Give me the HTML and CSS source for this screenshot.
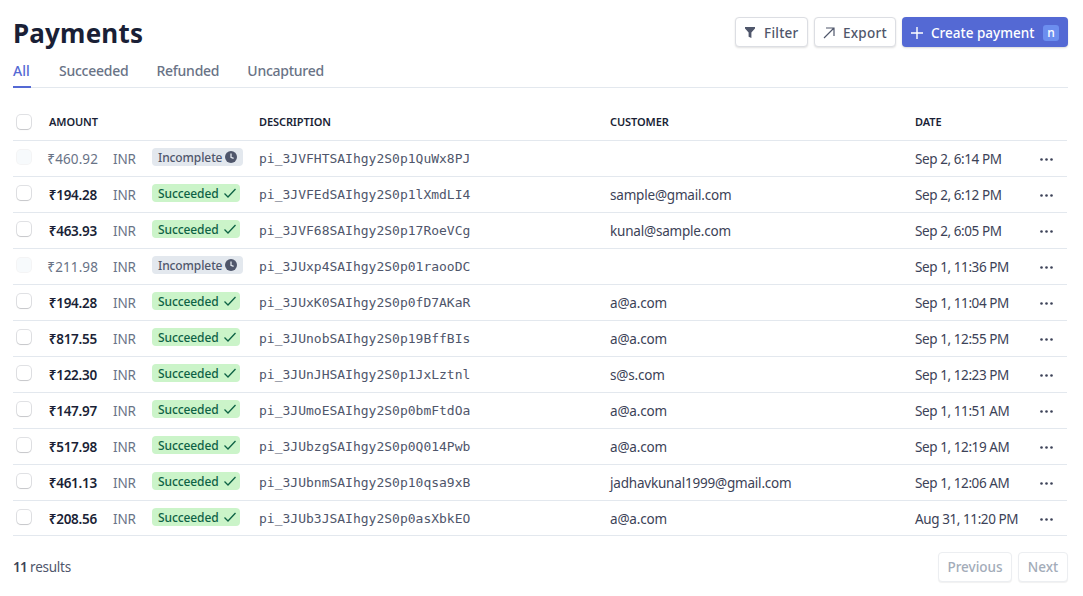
FILE: index.html
```html
<!DOCTYPE html>
<html lang="en">
<head>
<meta charset="utf-8">
<title>Payments</title>
<link rel="stylesheet" href="styles.css">
</head>
<body>
<svg class="defs" width="0" height="0" aria-hidden="true">
  <symbol id="check" viewBox="0 0 14 12"><path d="M1.5 6.5 5 10 12.5 2" fill="none" stroke="currentColor" stroke-width="1.3"/></symbol>
  <symbol id="clock" viewBox="0 0 12 12"><circle cx="6" cy="6" r="6" fill="currentColor"/><path d="M6 2.6V6.3L8.6 7.4" fill="none" stroke="#e3e8ef" stroke-width="1.3"/></symbol>
  <symbol id="dots" viewBox="0 0 13 3"><circle cx="1.5" cy="1.5" r="1.3"/><circle cx="6.5" cy="1.5" r="1.3"/><circle cx="11.5" cy="1.5" r="1.3"/></symbol>
</svg>
<main class="page">
  <header class="top">
    <h1>Payments</h1>
    <div class="actions">
      <button class="btn filter"><svg width="10" height="11" viewBox="0 0 10 11"><path d="M0 0H10V1.6L6.4 5.4V11L3.6 9.8V5.4L0 1.6Z" fill="currentColor"/></svg>Filter</button>
      <button class="btn export"><svg width="12" height="12" viewBox="0 0 12 12"><path d="M1 11 11 1M3 1H11V9" fill="none" stroke="currentColor" stroke-width="1.2"/></svg>Export</button>
      <button class="btn primary"><svg width="12" height="12" viewBox="0 0 12 12"><path d="M6 0V12M0 6H12" stroke="currentColor" stroke-width="1.4"/></svg>Create payment<span class="kbd">n</span></button>
    </div>
  </header>
  <nav class="tabs">
    <a class="tab active">All</a><a class="tab">Succeeded</a><a class="tab">Refunded</a><a class="tab">Uncaptured</a>
  </nav>
  <table>
    <colgroup><col class="c-check"><col class="c-amt"><col class="c-cur"><col class="c-badge"><col class="c-desc"><col class="c-cust"><col class="c-date"><col class="c-more"></colgroup>
    <thead>
      <tr><th><span class="box"></span></th><th class="h-amt" colspan="3">AMOUNT</th><th>DESCRIPTION</th><th>CUSTOMER</th><th>DATE</th><th></th></tr>
    </thead>
    <tbody>
      <tr class="muted"><td><span class="box"></span></td><td class="amount">₹460.92</td><td class="cur">INR</td><td><span class="badge grey">Incomplete<svg width="12" height="12"><use href="#clock"/></svg></span></td><td class="mono">pi_3JVFHTSAIhgy2S0p1QuWx8PJ</td><td class="cust"></td><td class="date">Sep 2, 6:14 PM</td><td class="more"><svg width="13" height="3"><use href="#dots"/></svg></td></tr>
      <tr><td><span class="box"></span></td><td class="amount">₹194.28</td><td class="cur">INR</td><td><span class="badge green">Succeeded<svg width="14" height="12"><use href="#check"/></svg></span></td><td class="mono">pi_3JVFEdSAIhgy2S0p1lXmdLI4</td><td class="cust">sample@gmail.com</td><td class="date">Sep 2, 6:12 PM</td><td class="more"><svg width="13" height="3"><use href="#dots"/></svg></td></tr>
      <tr><td><span class="box"></span></td><td class="amount">₹463.93</td><td class="cur">INR</td><td><span class="badge green">Succeeded<svg width="14" height="12"><use href="#check"/></svg></span></td><td class="mono">pi_3JVF68SAIhgy2S0p17RoeVCg</td><td class="cust">kunal@sample.com</td><td class="date">Sep 2, 6:05 PM</td><td class="more"><svg width="13" height="3"><use href="#dots"/></svg></td></tr>
      <tr class="muted"><td><span class="box"></span></td><td class="amount">₹211.98</td><td class="cur">INR</td><td><span class="badge grey">Incomplete<svg width="12" height="12"><use href="#clock"/></svg></span></td><td class="mono">pi_3JUxp4SAIhgy2S0p01raooDC</td><td class="cust"></td><td class="date">Sep 1, 11:36 PM</td><td class="more"><svg width="13" height="3"><use href="#dots"/></svg></td></tr>
      <tr><td><span class="box"></span></td><td class="amount">₹194.28</td><td class="cur">INR</td><td><span class="badge green">Succeeded<svg width="14" height="12"><use href="#check"/></svg></span></td><td class="mono">pi_3JUxK0SAIhgy2S0p0fD7AKaR</td><td class="cust">a@a.com</td><td class="date">Sep 1, 11:04 PM</td><td class="more"><svg width="13" height="3"><use href="#dots"/></svg></td></tr>
      <tr><td><span class="box"></span></td><td class="amount">₹817.55</td><td class="cur">INR</td><td><span class="badge green">Succeeded<svg width="14" height="12"><use href="#check"/></svg></span></td><td class="mono">pi_3JUnobSAIhgy2S0p19BffBIs</td><td class="cust">a@a.com</td><td class="date">Sep 1, 12:55 PM</td><td class="more"><svg width="13" height="3"><use href="#dots"/></svg></td></tr>
      <tr><td><span class="box"></span></td><td class="amount">₹122.30</td><td class="cur">INR</td><td><span class="badge green">Succeeded<svg width="14" height="12"><use href="#check"/></svg></span></td><td class="mono">pi_3JUnJHSAIhgy2S0p1JxLztnl</td><td class="cust">s@s.com</td><td class="date">Sep 1, 12:23 PM</td><td class="more"><svg width="13" height="3"><use href="#dots"/></svg></td></tr>
      <tr><td><span class="box"></span></td><td class="amount">₹147.97</td><td class="cur">INR</td><td><span class="badge green">Succeeded<svg width="14" height="12"><use href="#check"/></svg></span></td><td class="mono">pi_3JUmoESAIhgy2S0p0bmFtdOa</td><td class="cust">a@a.com</td><td class="date">Sep 1, 11:51 AM</td><td class="more"><svg width="13" height="3"><use href="#dots"/></svg></td></tr>
      <tr><td><span class="box"></span></td><td class="amount">₹517.98</td><td class="cur">INR</td><td><span class="badge green">Succeeded<svg width="14" height="12"><use href="#check"/></svg></span></td><td class="mono">pi_3JUbzgSAIhgy2S0p0Q014Pwb</td><td class="cust">a@a.com</td><td class="date">Sep 1, 12:19 AM</td><td class="more"><svg width="13" height="3"><use href="#dots"/></svg></td></tr>
      <tr><td><span class="box"></span></td><td class="amount">₹461.13</td><td class="cur">INR</td><td><span class="badge green">Succeeded<svg width="14" height="12"><use href="#check"/></svg></span></td><td class="mono">pi_3JUbnmSAIhgy2S0p10qsa9xB</td><td class="cust">jadhavkunal1999@gmail.com</td><td class="date">Sep 1, 12:06 AM</td><td class="more"><svg width="13" height="3"><use href="#dots"/></svg></td></tr>
      <tr class="last"><td><span class="box"></span></td><td class="amount">₹208.56</td><td class="cur">INR</td><td><span class="badge green">Succeeded<svg width="14" height="12"><use href="#check"/></svg></span></td><td class="mono">pi_3JUb3JSAIhgy2S0p0asXbkEO</td><td class="cust">a@a.com</td><td class="date">Aug 31, 11:20 PM</td><td class="more"><svg width="13" height="3"><use href="#dots"/></svg></td></tr>
    </tbody>
  </table>
  <footer class="foot">
    <span class="count"><b>11</b> results</span>
    <div class="pager"><button class="btn off prev">Previous</button><button class="btn off next">Next</button></div>
  </footer>
</main>
</body>
</html>
```
FILE: styles.css
```css
* { box-sizing: border-box; }
html, body { margin: 0; height: 100%; background: #fff; }
body { font-family: "Noto Sans", "Open Sans", sans-serif; font-size: 13.5px; color: #3c4257; overflow: hidden; }
.defs { position: absolute; }
.page { padding: 17px 15px 0 13px; width: 1083px; }
.top { display: flex; justify-content: space-between; align-items: flex-start; height: 43px; }
h1 { margin: 0; font-size: 26px; line-height: 32px; font-weight: 700; color: #1a1f36; letter-spacing: 0.18px; }
.actions { display: flex; gap: 6px; }
.btn { display: inline-flex; align-items: center; height: 30px; border: 1px solid #dcdee3; border-radius: 4px; background: #fff; font: 500 13.5px/20px "Noto Sans", sans-serif; color: #4f566b; box-shadow: 0 1px 2px rgba(0,0,0,.12); padding: 1px 8px 0; letter-spacing: 0.25px; white-space: nowrap; }
.filter { width: 73px; gap: 9px; padding-left: 9px; }
.export { width: 82px; gap: 8px; padding-left: 8px; }
.primary { width: 166px; border: 0; padding: 1px 9px 0; background: #5469d4; color: #fff; gap: 8px; box-shadow: 0 1px 2px rgba(0,0,0,.15); letter-spacing: 0; }
.kbd { margin-left: auto; width: 16px; height: 16px; border-radius: 3px; background: #6c8eef; font-size: 12px; line-height: 15px; text-align: center; }
.tabs { display: flex; gap: 28px; height: 28px; border-bottom: 1px solid #e3e8ee; }
.tab { height: 28px; font-weight: 500; font-size: 14px; line-height: 22px; color: #697386; letter-spacing: -0.25px; }
.tab.active { width: 18px; color: #5469d4; border-bottom: 2px solid #5469d4; letter-spacing: 0; }
table { width: 1054px; border-collapse: collapse; table-layout: fixed; }
.c-check { width: 30px; }
.c-amt { width: 55px; }
.c-cur { width: 54px; }
.c-badge { width: 107px; }
.c-desc { width: 351px; }
.c-cust { width: 305px; }
.c-date { width: 118px; }
th { height: 52px; padding: 16px 0 0; text-align: left; font-size: 11px; font-weight: 600; color: #1a1f36; border-bottom: 1px solid #e3e8ee; letter-spacing: -0.1px; }
th.h-amt { padding-left: 6px; }
td { height: 36px; padding: 1px 0 0; border-bottom: 1px solid #e3e8ee; color: #3c4257; white-space: nowrap; letter-spacing: -0.2px; }
.last td { height: 35px; padding-top: 2px; }
.box { display: block; width: 14px; height: 14px; margin: 0 0 3px 4px; border-radius: 4px; background: #fff; box-shadow: 0 0 0 1px rgba(60,66,87,.16), 0 1px 1px rgba(0,0,0,.12); }
th .box { margin-bottom: 0; }
.amount { font-weight: 600; color: #1a1f36; text-align: right; letter-spacing: -0.25px; padding-right: 1px; }
.cur { color: #697386; padding-left: 15px; }
.badge { display: inline-flex; align-items: center; justify-content: space-between; height: 18px; padding: 0 6px; border-radius: 4px; font-size: 12px; font-weight: 500; margin-bottom: 3px; vertical-align: middle; letter-spacing: -0.1px; }
.green { background: #cbf4c9; color: #0e6245; width: 88px; padding-right: 3px; }
.grey { background: #e3e8ee; color: #4f566b; width: 91px; }
.mono { font-family: "DejaVu Sans Mono", monospace; font-size: 13px; color: #4f566b; letter-spacing: 0; }
.date { color: #3c4257; letter-spacing: -0.42px; }
.more { text-align: right; padding-right: 14px; fill: #3c4257; }
.more svg { display: inline-block; vertical-align: 3px; }
.muted .amount { font-weight: 400; color: #697386; letter-spacing: 0.1px; padding-right: 0; }
.muted .box { background: #f7fafc; box-shadow: 0 0 0 1px rgba(60,66,87,.06); }
.foot { display: flex; justify-content: space-between; align-items: center; margin-top: 16px; }
.count { color: #4f566b; letter-spacing: -0.25px; }
.count b { font-weight: 600; color: #3c4257; letter-spacing: -0.8px; }
.pager { display: flex; gap: 6px; }
.off { color: #a3acb9; border-color: #eceef1; box-shadow: 0 1px 1px rgba(0,0,0,.06); justify-content: center; padding: 0; letter-spacing: 0; }
.prev { width: 74px; }
.next { width: 50px; }
```
